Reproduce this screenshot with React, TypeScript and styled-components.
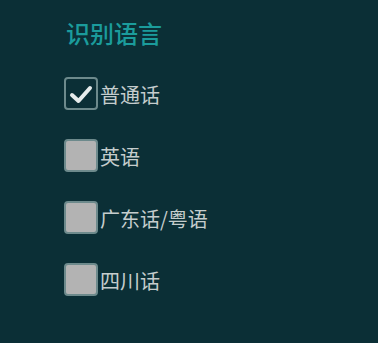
import React, { useState } from "react";
import styled, { createGlobalStyle } from "styled-components";

const Global = createGlobalStyle`
  html, body { margin: 0; padding: 0; background: #0b2f36; }
  body { font-family: "Noto Sans CJK SC", "Noto Sans", sans-serif; }
`;

const Panel = styled.div`
  width: 378px;
  height: 343px;
  background: #0b2f36;
  box-sizing: border-box;
  padding: 21px 0 0 64px;
  display: flex;
  flex-direction: column;
`;

const Title = styled.div`
  font-size: 24px;
  line-height: 24px;
  height: 24px;
  color: #1b9c9c;
  font-weight: 500;
  margin-left: 2px;
  margin-bottom: 32px;
`;

const List = styled.div`
  display: flex;
  flex-direction: column;
  gap: 29px;
`;

const Row = styled.label`
  display: flex;
  align-items: center;
  gap: 2px;
  height: 33px;
  cursor: pointer;
`;

const Box = styled.span<{ $checked: boolean }>`
  width: 34px;
  height: 33px;
  box-sizing: border-box;
  border: 2px solid #6d8a8c;
  border-radius: 4px;
  background: ${(p) => (p.$checked ? "transparent" : "#b3b3b3")};
  display: flex;
  align-items: center;
  justify-content: center;
`;

const Label = styled.span`
  font-size: 20px;
  line-height: 20px;
  color: #c5cdcd;
  margin-top: 2px;
`;

const items = ["普通话", "英语", "广东话/粤语", "四川话"];

export default function App() {
  const [checked, setChecked] = useState<boolean[]>([true, false, false, false]);
  return (
    <>
      <Global />
      <Panel>
        <Title>识别语言</Title>
        <List>
          {items.map((t, i) => (
            <Row
              key={t}
              onClick={() =>
                setChecked((c) => c.map((v, j) => (j === i ? !v : v)))
              }
            >
              <Box $checked={checked[i]}>
                {checked[i] && (
                  <svg width="24" height="20" viewBox="0 0 24 20">
                    <path
                      d="M3 11 L9.5 17 L21 4"
                      fill="none"
                      stroke="#e6ecec"
                      strokeWidth="4"
                      strokeLinecap="round"
                      strokeLinejoin="round"
                    />
                  </svg>
                )}
              </Box>
              <Label>{t}</Label>
            </Row>
          ))}
        </List>
      </Panel>
    </>
  );
}
